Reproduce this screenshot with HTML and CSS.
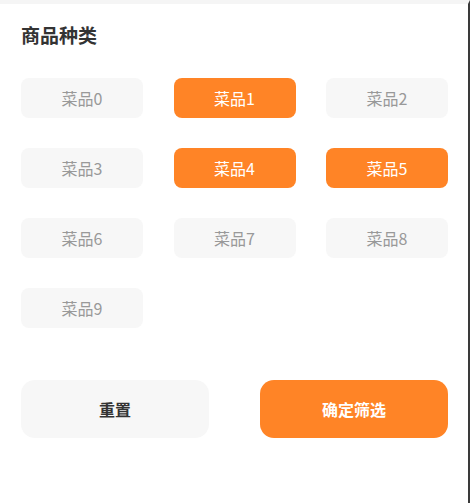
FILE: index.html
```html
<!DOCTYPE html>
<html lang="zh-CN">
<head>
  <meta charset="UTF-8" />
  <title>商品筛选</title>
  <link rel="stylesheet" href="styles.css">
</head>
<body>
  <div class="panel">
    <h2 class="panel-title">商品种类</h2>

    <div class="chip-grid">
      <button class="chip">菜品0</button>
      <button class="chip active">菜品1</button>
      <button class="chip">菜品2</button>
      <button class="chip">菜品3</button>
      <button class="chip active">菜品4</button>
      <button class="chip active">菜品5</button>
      <button class="chip">菜品6</button>
      <button class="chip">菜品7</button>
      <button class="chip">菜品8</button>
      <button class="chip">菜品9</button>
    </div>

    <div class="actions">
      <button class="btn btn-reset">重置</button>
      <button class="btn btn-confirm">确定筛选</button>
    </div>
  </div>
</body>
</html>
```

FILE: styles.css
```css
html, body {
  margin: 0;
  padding: 0;
  height: 100%;
}

body {
  font-family: "Noto Sans CJK SC", "Noto Sans", sans-serif;
  background-color: #fff;
  color: #333;
}

.panel {
  box-sizing: border-box;
  width: 470px;
  height: 100%;
  border-top: 4px solid #f5f5f5;
  border-right: 2px solid #3a3a3a;
  padding: 0 20px 0 21px;
}

.panel-title {
  font-size: 19px;
  font-weight: bold;
  color: #333;
  margin: 0;
  padding-top: 18px;
  line-height: 26px;
}

.chip-grid {
  display: grid;
  grid-template-columns: repeat(3, 1fr);
  column-gap: 30.5px;
  row-gap: 30px;
  margin-top: 30px;
}

.chip {
  height: 40px;
  border: none;
  border-radius: 8px;
  background-color: #f7f7f7;
  color: #999;
  font-family: inherit;
  font-size: 16px;
  padding: 0;
  cursor: pointer;
}

.chip.active {
  background-color: #ff8426;
  color: #fff;
}

.actions {
  display: flex;
  justify-content: space-between;
  margin-top: 52px;
}

.btn {
  width: 188px;
  height: 58px;
  border: none;
  border-radius: 14px;
  font-family: inherit;
  font-size: 16px;
  font-weight: bold;
  cursor: pointer;
}

.btn-reset {
  background-color: #f7f7f7;
  color: #333;
}

.btn-confirm {
  background-color: #ff8426;
  color: #fff;
}
```
